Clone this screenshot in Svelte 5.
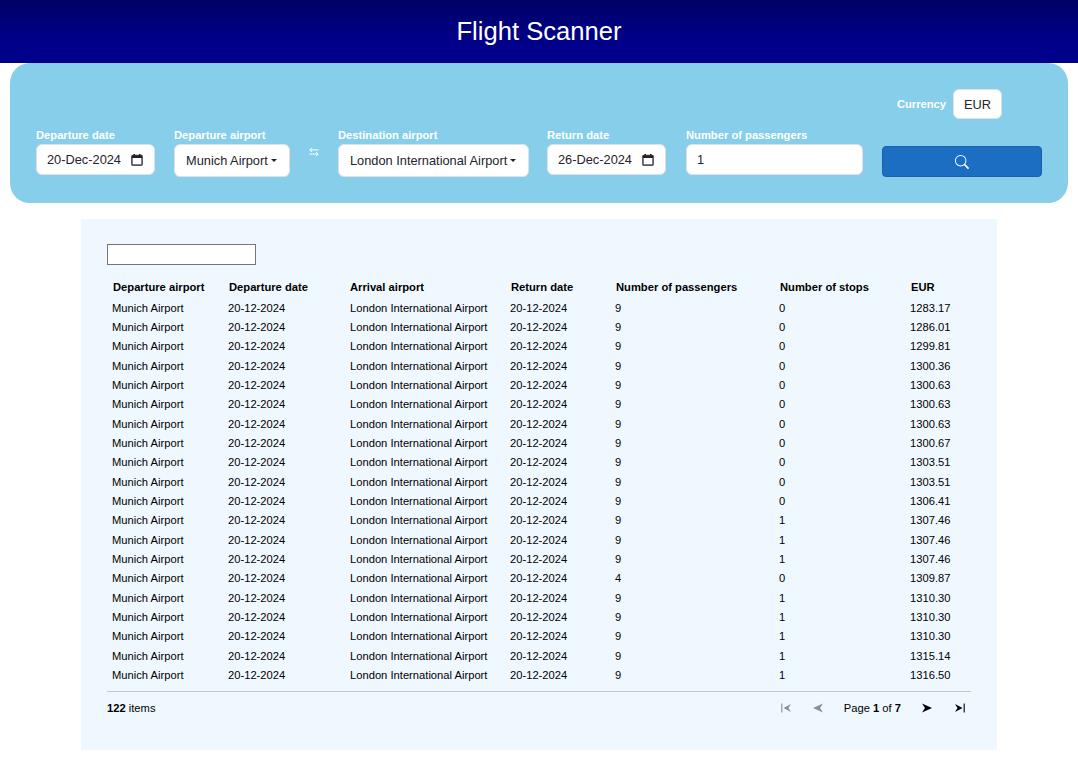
<script>
  const prices = ['1283.17','1286.01','1299.81','1300.36','1300.63','1300.63','1300.63','1300.67','1303.51','1303.51','1306.41','1307.46','1307.46','1307.46','1309.87','1310.30','1310.30','1310.30','1315.14','1316.50'];
  const rows = prices.map((eur, i) => ({
    eur,
    pax: i === 14 ? 4 : 9,
    stops: i < 11 || i === 14 ? 0 : 1
  }));
  const headers = ['Departure airport','Departure date','Arrival airport','Return date','Number of passengers','Number of stops','EUR'];
</script>

<header class="top"><h1>Flight Scanner</h1></header>

<section class="search">
  <div class="currency">
    <span class="label">Currency</span>
    <button class="pick cur">EUR</button>
  </div>
  <div class="fields">
    <div class="field">
      <span class="label">Departure date</span>
      <div class="control date">
        <span>20-Dec-2024</span>
        <svg width="12" height="12" viewBox="0 0 12 12"><path d="M1.700 1.500h8.600a.800.800 0 0 1 .800.800v8a.800.800 0 0 1-.800.800H1.700a.800.800 0 0 1-.800-.800v-8a.800.800 0 0 1 .800-.800z" fill="none" stroke="#555" stroke-width="1.700"/><rect x="1" y="1.500" width="10" height="2.500" fill="#222"/><rect x="2.500" y="0" width="1.500" height="2" fill="#222"/><rect x="8" y="0" width="1.500" height="2" fill="#222"/></svg>
      </div>
    </div>
    <div class="field">
      <span class="label">Departure airport</span>
      <button class="pick dep">Munich Airport<i class="caret"></i></button>
    </div>
    <div class="swap">
      <svg width="12" height="12" viewBox="0 0 12 12" fill="none" stroke="#fff" stroke-width="1.200"><path d="M11.500 3.500H1M3.500 1 1 3.500 3.500 6M.5 8.500H11M8.500 6 11 8.500 8.500 11"/></svg>
    </div>
    <div class="field">
      <span class="label">Destination airport</span>
      <button class="pick dest">London International Airport<i class="caret"></i></button>
    </div>
    <div class="field ret">
      <span class="label">Return date</span>
      <div class="control date">
        <span>26-Dec-2024</span>
        <svg width="12" height="12" viewBox="0 0 12 12"><path d="M1.700 1.500h8.600a.800.800 0 0 1 .800.800v8a.800.800 0 0 1-.800.800H1.700a.800.800 0 0 1-.800-.800v-8a.800.800 0 0 1 .800-.800z" fill="none" stroke="#555" stroke-width="1.700"/><rect x="1" y="1.500" width="10" height="2.500" fill="#222"/><rect x="2.500" y="0" width="1.500" height="2" fill="#222"/><rect x="8" y="0" width="1.500" height="2" fill="#222"/></svg>
      </div>
    </div>
    <div class="field">
      <span class="label">Number of passengers</span>
      <input class="control pax" value="1" />
    </div>
    <button class="go" aria-label="Search">
      <svg width="14" height="14" viewBox="0 0 16 16" fill="#fff"><path d="M11.742 10.344a6.500 6.500 0 1 0-1.397 1.398h-.001l3.850 3.850a1 1 0 0 0 1.415-1.414l-3.850-3.850zM12 6.500a5.500 5.500 0 1 1-11 0 5.500 5.500 0 0 1 11 0z"/></svg>
    </button>
  </div>
</section>

<main class="results">
  <input class="filter" />
  <table>
    <colgroup><col class="c1"/><col class="c2"/><col class="c3"/><col class="c4"/><col class="c5"/><col class="c6"/><col class="c7"/></colgroup>
    <thead><tr>{#each headers as h}<th>{h}</th>{/each}</tr></thead>
    <tbody>
      {#each rows as r}
        <tr>
          <td>Munich Airport</td><td>20-12-2024</td><td class="arr">London International Airport</td><td>20-12-2024</td><td>{r.pax}</td><td>{r.stops}</td><td>{r.eur}</td>
        </tr>
      {/each}
    </tbody>
  </table>
  <footer class="pager">
    <span><b>122</b> items</span>
    <nav class="pages">
      <svg class="off" width="10" height="10" viewBox="0 0 10 10"><path d="M.8 .5v9" stroke="currentColor" stroke-width="1.100" fill="none"/><path d="M10 1 2.500 5 10 9 7.500 5z" fill="currentColor"/></svg>
      <svg class="off" width="10" height="10" viewBox="0 0 10 10"><path d="M10 .5 0 5l10 4.500L7 5z" fill="currentColor"/></svg>
      <span class="page">Page <b>1</b> of <b>7</b></span>
      <svg class="next" width="10" height="10" viewBox="0 0 10 10"><path d="M0 .5 10 5 0 9.500 3 5z" fill="currentColor"/></svg>
      <svg class="last" width="10" height="10" viewBox="0 0 10 10"><path d="M9.200 .5v9" stroke="currentColor" stroke-width="1.100" fill="none"/><path d="M0 1l7.500 4L0 9l2.500-4z" fill="currentColor"/></svg>
    </nav>
  </footer>
</main>

<style>
  :global(body) { margin: 0; font-family: "Liberation Sans", Arial, sans-serif; background: #fff; color: #000; }
  .top { height: 63px; background: linear-gradient(#000066, #00008b 70%); display: flex; align-items: center; justify-content: center; }
  h1 { margin: 0; color: #fff; font-size: 25.600px; font-weight: 400; line-height: 1; }
  .search { margin: 0 10px; height: 140px; box-sizing: border-box; background: #87ceeb; border-radius: 20px; padding: 26px 26px 0; }
  .label { color: #fff; font-size: 11.200px; font-weight: 700; line-height: 13px; display: block; }
  .currency { display: flex; align-items: center; justify-content: flex-end; gap: 7px; height: 30px; padding-right: 40px; }
  .fields { display: flex; align-items: flex-start; gap: 19px; margin-top: 10px; }
  .field { display: flex; flex-direction: column; gap: 2px; }
  .ret { margin: 0 1px 0 -1px; }
  .control, .pick { box-sizing: border-box; background: #fff; border: 1px solid #dee2e6; border-radius: 6px; font: 12.800px "Liberation Sans", Arial, sans-serif; color: #212529; }
  .control { height: 31px; padding: 0 10px; }
  .date { width: 119px; display: flex; align-items: center; justify-content: space-between; padding-right: 11px; }
  .pax { width: 177px; outline: none; }
  .pick { height: 33px; padding: 0 11px; display: inline-flex; align-items: center; white-space: nowrap; }
  .cur { height: 30px; width: 49px; justify-content: center; padding: 0; }
  .dep { width: 116px; }
  .dest { width: 191px; }
  .caret { display: inline-block; margin-left: 3px; border-top: 3px solid currentColor; border-left: 3px solid transparent; border-right: 3px solid transparent; }
  .swap { width: 10px; padding-top: 17px; display: flex; justify-content: center; }
  .go { width: 160px; height: 31px; margin-top: 17px; background: #1b6ec2; border: 1px solid #1861ac; border-radius: 4px; display: flex; align-items: center; justify-content: center; padding: 0; }
  .results { margin: 16px 81px 0; height: 531px; box-sizing: border-box; background: #f0f8ff; padding: 25px 26px 0; }
  .filter { display: block; box-sizing: border-box; width: 149px; height: 21px; border: 1px solid #767676; background: #fff; padding: 0; margin-bottom: 12px; outline: none; }
  table { width: 864px; border-collapse: collapse; table-layout: fixed; font-size: 11.200px; }
  .c1 { width: 116px; } .c2 { width: 121px; } .c3 { width: 161px; } .c4 { width: 105px; } .c5 { width: 164px; } .c6 { width: 131px; }
  th { text-align: left; font-weight: 700; height: 19px; padding: 0 0 2.450px 6px; }
  td { height: 19.333px; padding: 0 0 0 5px; line-height: 13px; }
  td.arr { padding-left: 6px; }
  .pager { margin-top: 6px; border-top: 1px solid #c8c8c8; height: 32px; display: flex; align-items: center; justify-content: space-between; font-size: 11.200px; }
  .pages { display: flex; align-items: center; gap: 22px; padding-right: 6px; }
  .page { margin-left: -1px; }
  .next { margin-left: -1px; }
  .last { margin-left: 1px; }
  .off { color: #8a8f94; }
</style>
